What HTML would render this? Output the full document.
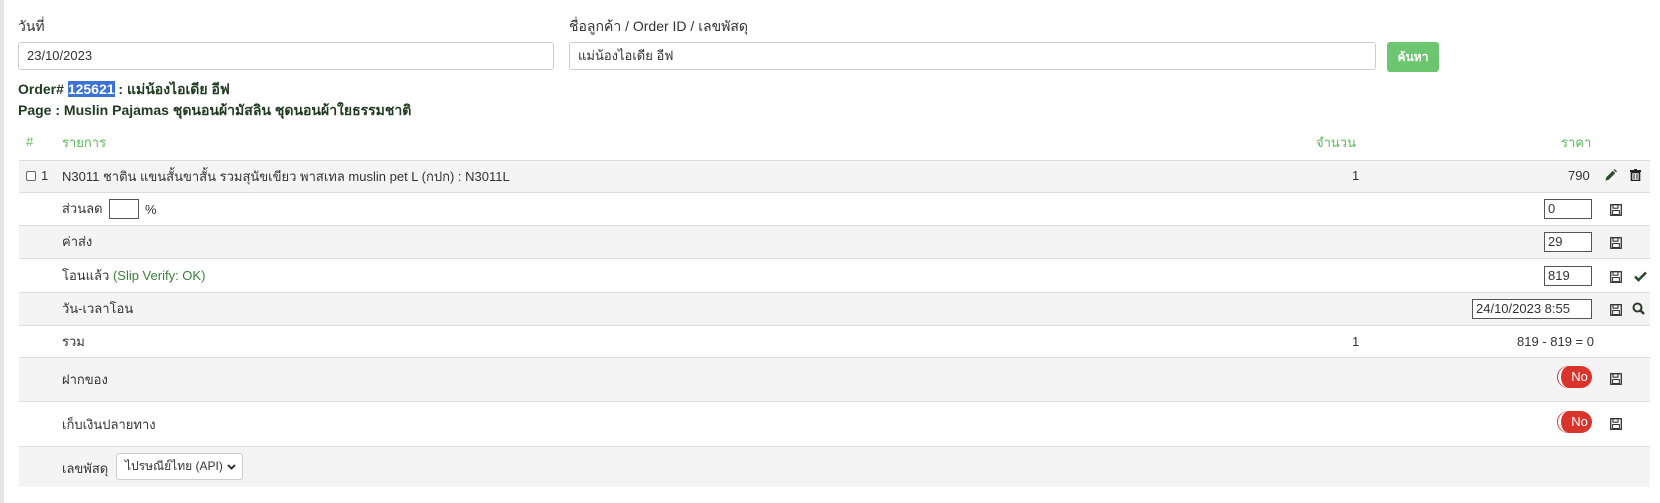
<!DOCTYPE html>
<html><head><meta charset="utf-8"><style>
*{box-sizing:border-box}
body{margin:0;width:1660px;height:503px;background:#fff;font-family:"Liberation Sans","Noto Sans CJK SC",sans-serif;font-size:13px;color:#333;position:relative;overflow:hidden}
.strip{position:absolute;left:0;top:0;width:4px;height:503px;background:#e6e6e6}
.a{position:absolute;white-space:nowrap}
.inp{position:absolute;border:1px solid #ccc;border-radius:3px;background:#fff;padding:0 8px;line-height:26px}
.row{position:absolute;left:19px;width:1631px;border-top:1px solid #ddd}
.g{background:#f4f4f4}
.box{position:absolute;border:1px solid #555;background:#fff;height:20px;line-height:18px;padding-left:3px;font-size:13px}
.tog{position:absolute;width:34px;height:22px;border-radius:11px;background:#d9342b;color:#fff;font-size:13px;line-height:22px;text-align:center;padding-left:6px;border-left:3px solid #fff;box-shadow:-1px 0 0 #d9342b}
</style></head><body>
<div class="strip"></div>
<div class="a" style="left:18px;top:16px;font-size:14px">วันที่</div>
<div class="inp" style="left:18px;top:42px;width:536px;height:28px">23/10/2023</div>
<div class="a" style="left:569px;top:16px;font-size:14px">ชื่อลูกค้า / Order ID / เลขพัสดุ</div>
<div class="inp" style="left:569px;top:42px;width:807px;height:28px">แม่น้องไอเดีย อีฟ</div>
<div class="a" style="left:1387px;top:42px;width:52px;height:30px;background:#6cc66f;color:#fff;border-radius:3px;text-align:center;line-height:30px;font-weight:bold;font-size:12px">ค้นหา</div>
<div class="a" style="left:18px;top:79px;font-weight:bold;font-size:14px;color:#1f3a1f">Order# <span style="background:#3a72d6;color:#fff">125621</span> : แม่น้องไอเดีย อีฟ</div>
<div class="a" style="left:18px;top:100px;font-weight:bold;font-size:14px;color:#1f3a1f">Page : Muslin Pajamas ชุดนอนผ้ามัสลิน ชุดนอนผ้าใยธรรมชาติ</div>
<div class="a" style="left:26px;top:134px;color:#5cb85c">#</div>
<div class="a" style="left:62px;top:132px;color:#5cb85c">รายการ</div>
<div class="a" style="left:1316px;top:132px;color:#5cb85c">จำนวน</div>
<div class="a" style="left:1561px;top:132px;color:#5cb85c">ราคา</div>

<div class="row g" style="top:160px;height:32px"></div>
<div class="row" style="top:192px;height:33px"></div>
<div class="row g" style="top:225px;height:33px"></div>
<div class="row" style="top:258px;height:34px"></div>
<div class="row g" style="top:292px;height:33px"></div>
<div class="row" style="top:325px;height:32px"></div>
<div class="row g" style="top:357px;height:44px"></div>
<div class="row" style="top:401px;height:45px"></div>
<div class="row g" style="top:446px;height:41px;border-bottom:none"></div>

<div class="a" style="left:26px;top:171px;width:10px;height:10px;border:1px solid #666;border-radius:2px;background:#fff"></div>
<div class="a" style="left:41px;top:168px">1</div>
<div class="a" style="left:62px;top:166px">N3011 ชาติน แขนสั้นขาสั้น รวมสุนัขเขียว พาสเทล muslin pet L (กปก) : N3011L</div>
<div class="a" style="left:1352px;top:168px">1</div>
<div class="a" style="left:1568px;top:168px">790</div>
<svg class="a" style="left:1605px;top:169px" width="12" height="12" viewBox="0 0 12 12"><path d="M0.5 11.5l0.8-3.2 6.5-6.5 2.4 2.4-6.5 6.5z" fill="#2d4a2d"/><path d="M8.6 1l1-1 2.4 2.4-1 1z" fill="#2d4a2d"/></svg>
<svg class="a" style="left:1630px;top:169px" width="11" height="12" viewBox="0 0 11 12"><rect x="0" y="1" width="11" height="2" fill="#222"/><rect x="4" y="0" width="3" height="2" fill="#222"/><path d="M1.5 3.5h8v8h-8z" fill="none" stroke="#222" stroke-width="1.6"/><path d="M4 5v5M7 5v5" stroke="#222" stroke-width="1"/></svg>

<div class="a" style="left:62px;top:198px">ส่วนลด</div>
<div class="box" style="left:109px;top:199px;width:30px"></div>
<div class="a" style="left:145px;top:202px">%</div>
<div class="box" style="left:1544px;top:199px;width:48px">0</div>
<div class="a" style="left:62px;top:231px">ค่าส่ง</div>
<div class="box" style="left:1544px;top:232px;width:48px">29</div>
<div class="a" style="left:62px;top:265px">โอนแล้ว <span style="color:#3b7d3b">(Slip Verify: OK)</span></div>
<div class="box" style="left:1544px;top:266px;width:48px">819</div>
<svg class="a" style="left:1634px;top:271px" width="13" height="11" viewBox="0 0 13 11"><path d="M1 5.5l3.5 3.5 7.5-7.5" fill="none" stroke="#2d4a2d" stroke-width="2.6"/></svg>
<div class="a" style="left:62px;top:298px">วัน-เวลาโอน</div>
<div class="box" style="left:1472px;top:299px;width:120px">24/10/2023 8:55</div>
<svg class="a" style="left:1632px;top:302px" width="13" height="13" viewBox="0 0 13 13"><circle cx="5.5" cy="5.5" r="4" fill="none" stroke="#2d3a2d" stroke-width="2"/><path d="M8.5 8.5l3.5 3.5" stroke="#2d3a2d" stroke-width="2.4"/></svg>
<div class="a" style="left:62px;top:331px">รวม</div>
<div class="a" style="left:1352px;top:334px">1</div>
<div class="a" style="left:1517px;top:334px">819 - 819 = 0</div>
<div class="a" style="left:62px;top:369px">ฝากของ</div>
<div class="tog" style="left:1558px;top:366px">No</div>
<div class="a" style="left:62px;top:414px">เก็บเงินปลายทาง</div>
<div class="tog" style="left:1558px;top:411px">No</div>
<div class="a" style="left:62px;top:458px">เลขพัสดุ</div>
<div class="a" style="left:116px;top:453px;width:127px;height:27px;border:1px solid #ccc;border-radius:3px;background:#fff;line-height:25px;padding-left:8px;font-size:12px">ไปรษณีย์ไทย (API)<svg style="position:absolute;right:6px;top:10px" width="9" height="6" viewBox="0 0 9 6"><path d="M1 1l3.5 3.5L8 1" fill="none" stroke="#222" stroke-width="1.8"/></svg></div>

<svg width="0" height="0" style="position:absolute"><defs><g id="fl"><rect x="0.7" y="0.7" width="10.6" height="10.6" fill="none" stroke="#333" stroke-width="1.3"/><rect x="3" y="0.7" width="5" height="3.5" fill="none" stroke="#333" stroke-width="1.1"/><rect x="2.6" y="6.5" width="6.8" height="4" fill="none" stroke="#333" stroke-width="1"/></g></defs></svg>
<svg class="a" style="left:1610px;top:204px" width="12" height="12"><use href="#fl"/></svg>
<svg class="a" style="left:1610px;top:237px" width="12" height="12"><use href="#fl"/></svg>
<svg class="a" style="left:1610px;top:271px" width="12" height="12"><use href="#fl"/></svg>
<svg class="a" style="left:1610px;top:304px" width="12" height="12"><use href="#fl"/></svg>
<svg class="a" style="left:1610px;top:373px" width="12" height="12"><use href="#fl"/></svg>
<svg class="a" style="left:1610px;top:418px" width="12" height="12"><use href="#fl"/></svg>
</body></html>
